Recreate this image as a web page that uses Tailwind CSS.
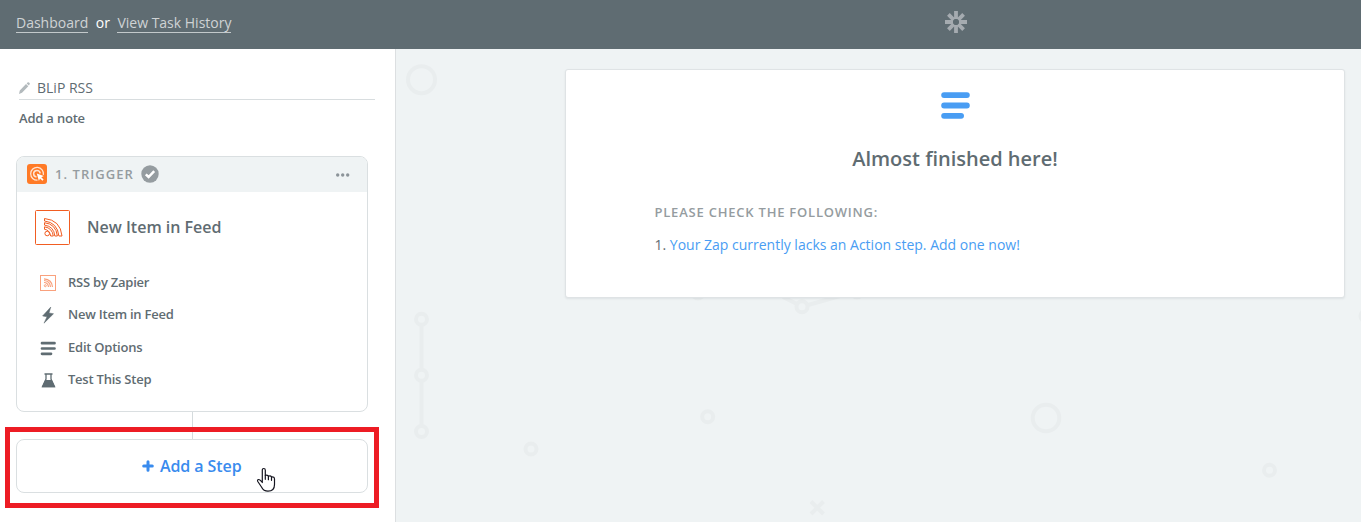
<!DOCTYPE html>
<html lang="en">
<head>
<meta charset="utf-8">
<title>BLiP RSS</title>
<script src="https://cdn.jsdelivr.net/npm/@tailwindcss/browser@4"></script>
</head>
<body class="flex h-[522px] w-[1361px] flex-col overflow-hidden bg-white font-['Open_Sans',sans-serif] text-[#5f6c72]">
<header class="grid h-[49px] shrink-0 grid-cols-[550px_811px] bg-[#5f6c72]">
  <nav class="flex items-start gap-[7.500px] pt-[13px] pl-4 text-sm leading-[19px] text-white">
    <a class="border-b border-[#c3c9cb] text-[#cfd3d5]">Dashboard</a><span>or</span><a class="border-b border-[#c3c9cb] text-[#cfd3d5]">View Task History</a>
  </nav>
  <div class="flex justify-center pt-[11px]">
    <svg class="h-[22px] w-[22px]" viewBox="0 0 22 22" fill="none" stroke="#a5abb0" stroke-width="3.8"><path d="M11 0v8M11 14v8M0 11h8M14 11h8M3.4 3.4l5.4 5.4M13.2 13.2l5.4 5.4M18.6 3.4l-5.4 5.4M8.8 13.2l-5.4 5.4"/></svg>
  </div>
</header>
<main class="flex min-h-0 flex-1">
  <aside class="flex w-[396px] shrink-0 flex-col border-r border-[#dcdfe1] bg-white pl-4">
    <div class="ml-[3px] mt-7 flex h-[23px] w-[356px] items-center border-b border-[#d8dddf]">
      <svg class="mr-[7px] h-3 w-[11px]" viewBox="0 0 11 12" fill="#b3babd"><path d="M0 12l.8-3.500L7 2.100l2.300 2.200L3 10.800zM7.700 1.400l.8-.9q.7-.7 1.500 0l.5.6q.7.7 0 1.400l-.6 1.100z"/></svg>
      <span class="text-sm leading-5">BLiP RSS</span>
    </div>
    <div class="ml-[3px] mt-2 text-[13px] leading-5 font-semibold tracking-[-0.200px]">Add a note</div>
    <section class="mt-7 h-[256px] w-[352px] shrink-0 overflow-hidden rounded-lg border border-[#dadfe1]">
      <div class="flex h-[35px] items-center bg-[#eff3f4] pl-2.5">
        <svg class="-mt-px h-5 w-5" viewBox="0 0 20 20"><rect width="20" height="20" rx="3" fill="#ff7a26"/><g fill="none" stroke="#ffe4d3" stroke-width="1.300"><path d="M10.500 16.200A6.400 6.400 0 1 1 16.400 10.800"/><path d="M9.500 13A3.300 3.300 0 1 1 13.200 9.300" stroke-width="1.500"/></g><path d="M9.800 9.500l7 2.500-2.500 1.200 2.300 2.400-1.200 1.200-2.400-2.400-1.100 2.500z" fill="#fff"/></svg>
        <span class="ml-2 w-[79px] text-[13px] font-semibold tracking-[1.050px] whitespace-nowrap text-[#959ca0]">1. TRIGGER</span>
        <svg class="-mt-px ml-[7px] h-[18px] w-[18px]" viewBox="0 0 18 18"><circle cx="9" cy="9" r="8.700" fill="#959ca0"/><path d="M4.800 9.300l2.800 2.700 5.600-5.800" fill="none" stroke="#fff" stroke-width="2.500"/></svg>
        <svg class="mr-[17px] ml-auto h-1 w-[14px]" viewBox="0 0 14 4" fill="#8c9499"><circle cx="1.700" cy="2" r="1.700"/><circle cx="6.700" cy="2" r="1.700"/><circle cx="11.700" cy="2" r="1.700"/></svg>
      </div>
      <div class="mt-[18px] ml-[18px] flex h-[35px] items-center">
        <svg class="h-[35px] w-[35px]" viewBox="0 0 35 35" fill="none" stroke="#f15d22"><rect x=".5" y=".5" width="34" height="34" rx="1" fill="#fff"/><circle cx="12.200" cy="23.500" r="2.300"/><path d="M9.500 16.800v2.500q5 .5 6.200 6.700h2.600q-1-8-8.800-9.200zM9.500 12.700v2.400q9.500 1.300 10.300 10.900h2.600q-1.400-12-12.900-13.300zM9.500 8.500v2.500q13 1.500 14.400 15h3.100q-1.500-16-17.500-17.500z"/></svg>
        <span class="-mt-0.5 ml-[17px] text-base leading-6 font-semibold">New Item in Feed</span>
      </div>
      <ul class="mt-[22px] ml-[22px] text-[13px] font-semibold tracking-[-0.230px]">
        <li class="flex h-8 items-center gap-[11px]"><svg class="h-[18px] w-[18px]" viewBox="0 0 18 18" fill="none" stroke="#f9a17d"><rect x="1.500" y="1.500" width="15" height="15"/><circle cx="6.300" cy="11.700" r="1"/><path d="M5 8.500q4 0 4.500 4.500M5 6.500q6 .5 6.500 6.500M5 4.800q8 .5 8.500 8.200" stroke-width="1.200"/></svg><span>RSS by Zapier</span></li>
        <li class="flex h-8 items-center gap-[11px]"><svg class="h-[18px] w-[18px]" viewBox="0 0 18 18" fill="#5f6c72"><path d="M11.800 1L3.600 9.900l4.400.9L5 17.200l9.500-9.400-4.500-.9z" stroke="#5f6c72" stroke-width=".5"/></svg><span>New Item in Feed</span></li>
        <li class="mt-px flex h-8 items-center gap-[11px]"><svg class="h-[18px] w-[18px]" viewBox="0 0 18 18" stroke="#5f6c72" stroke-width="2.700" stroke-linecap="round"><path d="M3 4.200h12.500M3 9.500h12.500M3 14.800h9"/></svg><span>Edit Options</span></li>
        <li class="flex h-8 items-center gap-[11px]"><svg class="h-[18px] w-[18px]" viewBox="0 0 18 18"><path d="M7 3v5L3.500 15.500h12L12 8V3" fill="#fff" stroke="#5f6c72" stroke-width="1.300"/><path d="M5.500 2.300h8v1.500h-8zM6.200 9h6.600l3.400 7.200H2.800z" fill="#5f6c72"/></svg><span>Test This Step</span></li>
      </ul>
    </section>
    <div class="ml-44 h-[27px] w-px shrink-0 bg-[#d5dbdd]"></div>
    <div class="relative h-[54px] w-[352px] shrink-0">
      <button class="flex h-full w-full items-center justify-center rounded-lg border border-[#dadfe1] text-base font-semibold tracking-[-0.080px] text-[#398bee]">
        <svg class="mr-[5.500px] h-3 w-3" viewBox="0 0 12 12" stroke="#398bee" stroke-width="3" stroke-linecap="round"><path d="M6 1.700v8.600M1.700 6h8.600"/></svg>Add a Step
      </button>
      <div class="pointer-events-none absolute -top-3 -left-[11px] h-[81px] w-[374px] border-[5px] border-[#ed1c24]"></div>
      <svg class="absolute top-[28px] left-[240px] h-[26px] w-5" viewBox="0 0 20 26" fill="#fff" stroke="#15151f" stroke-width="1.200" stroke-linejoin="round" stroke-linecap="round"><path d="M6.300 15.500V3.200q0-1.700 1.500-1.700t1.500 1.700v5.300q1.500-1 3.200.7 2-.8 3.200.8 2.800-.3 2.800 2v5.500q0 6.700-6.500 6.700-4.500 0-6.500-4.200l-3.700-5.500q-.8-1.700.8-2 1.200-.2 3.700 3z"/><path d="M9.300 8.500v3.800M12.400 9.200v3.500M15.500 10v3.300" fill="none"/></svg>
    </div>
  </aside>
  <div class="relative flex flex-1 items-start overflow-hidden bg-[#eff3f4] pt-5 pl-[169px]">
    <svg class="absolute top-0 left-0 h-[473px] w-[965px]" viewBox="396 49 965 473" fill="none" stroke="#e9edee" stroke-width="4"><circle cx="421.500" cy="79.700" r="13.500"/><circle cx="1046" cy="418" r="13.300"/><circle cx="421.500" cy="319.200" r="5.500"/><circle cx="421.500" cy="375.200" r="5.500"/><circle cx="421.500" cy="431.500" r="5.500"/><path d="M421.500 325v45M421.500 381v45M783 297l14 7M808 305l32-9"/><circle cx="531" cy="449" r="5.500"/><circle cx="707.700" cy="416.700" r="5.500"/><circle cx="802" cy="306.800" r="5.500"/><circle cx="698" cy="293" r="5.500"/><circle cx="857" cy="292" r="5.500"/><circle cx="1269.500" cy="470.200" r="5.500"/><circle cx="1366" cy="316" r="5.500"/><path d="M811 501.500l12.500 12.500M823.500 501.500l-12.500 12.500"/></svg>
    <section class="relative flex h-[229px] w-[780px] flex-col rounded-[3px] border border-[#dfe3e5] bg-white shadow-[0_1px_2px_rgba(95,108,114,0.12)]">
      <svg class="mx-auto mt-[22px] h-7 w-[29px] shrink-0" viewBox="0 0 29 28" stroke="#499df3" stroke-width="5.800" stroke-linecap="round"><path d="M3.100 3.100h22.800M3.100 13.500h22.800M3.100 23.800h17"/></svg>
      <h1 class="mt-[26px] text-center text-xl leading-[26px] font-semibold">Almost finished here!</h1>
      <h2 class="mt-[30px] ml-[88.500px] text-[13px] leading-5 font-semibold tracking-[0.780px] text-[#959ca0]">PLEASE CHECK THE FOLLOWING:</h2>
      <p class="mt-[13px] ml-[88.500px] text-sm leading-5">1. <a class="text-[#499df3]">Your Zap currently lacks an Action step. Add one now!</a></p>
    </section>
  </div>
</main>
</body>
</html>
